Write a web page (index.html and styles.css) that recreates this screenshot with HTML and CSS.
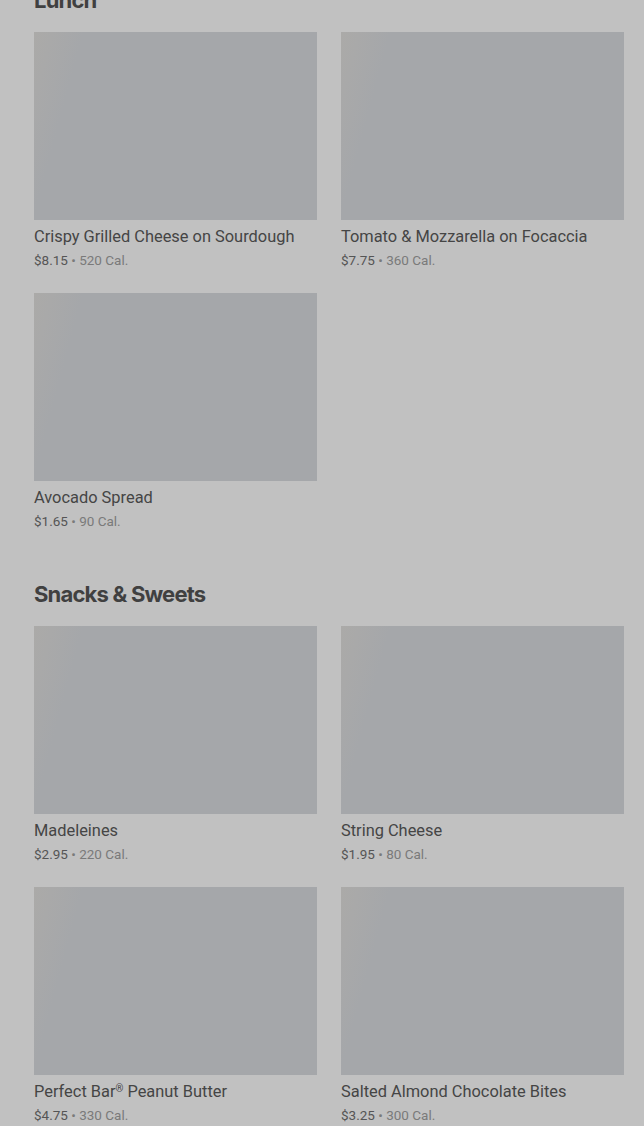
FILE: index.html
```html
<!DOCTYPE html>
<html lang="en">

<head>
    <meta charset="UTF-8">
    <meta name="viewport" content="width=device-width, initial-scale=1.0">
    <title>Menu</title>
    <link rel="stylesheet" href="styles.css">
</head>

<body>
    <main class="menu">
        <section class="menu-section">
            <h2>Lunch</h2>
            <div class="item-grid">
                <div class="item">
                    <div class="item-photo"></div>
                    <div class="item-name">Crispy Grilled Cheese on Sourdough</div>
                    <div class="item-meta"><span class="price">$8.15</span> &bull; 520 Cal.</div>
                </div>
                <div class="item">
                    <div class="item-photo"></div>
                    <div class="item-name">Tomato &amp; Mozzarella on Focaccia</div>
                    <div class="item-meta"><span class="price">$7.75</span> &bull; 360 Cal.</div>
                </div>
                <div class="item">
                    <div class="item-photo"></div>
                    <div class="item-name">Avocado Spread</div>
                    <div class="item-meta"><span class="price">$1.65</span> &bull; 90 Cal.</div>
                </div>
            </div>
        </section>

        <section class="menu-section">
            <h2>Snacks &amp; Sweets</h2>
            <div class="item-grid">
                <div class="item">
                    <div class="item-photo"></div>
                    <div class="item-name">Madeleines</div>
                    <div class="item-meta"><span class="price">$2.95</span> &bull; 220 Cal.</div>
                </div>
                <div class="item">
                    <div class="item-photo"></div>
                    <div class="item-name">String Cheese</div>
                    <div class="item-meta"><span class="price">$1.95</span> &bull; 80 Cal.</div>
                </div>
                <div class="item">
                    <div class="item-photo"></div>
                    <div class="item-name">Perfect Bar<span class="reg">&reg;</span> Peanut Butter</div>
                    <div class="item-meta"><span class="price">$4.75</span> &bull; 330 Cal.</div>
                </div>
                <div class="item">
                    <div class="item-photo"></div>
                    <div class="item-name">Salted Almond Chocolate Bites</div>
                    <div class="item-meta"><span class="price">$3.25</span> &bull; 300 Cal.</div>
                </div>
            </div>
        </section>
    </main>
</body>

</html>
```

FILE: styles.css
```css
body {
    font-family: Roboto, "Liberation Sans", sans-serif;
    margin: 0;
    padding: 0;
    background-color: #c1c1c1;
    overflow: hidden;
}

.menu {
    margin-top: -14px;
    padding: 0 20px 0 34px;
}

.menu-section {
    margin-bottom: 49px;
}

h2 {
    margin: 0 0 18px;
    font-family: Inter, "Liberation Sans", sans-serif;
    font-size: 22px;
    line-height: 28px;
    font-weight: 700;
    letter-spacing: -0.8px;
    color: #404040;
}

.item-grid {
    display: grid;
    grid-template-columns: 1fr 1fr;
    column-gap: 24px;
    row-gap: 23px;
}

.item-photo {
    height: 188px;
    background-color: #a5a7aa;
    background-image: linear-gradient(105deg, #abaaa8 0, #a9a9a9 18px, #a5a7aa 48px);
}

.item-name {
    margin-top: 6px;
    font-size: 16.4px;
    line-height: 22px;
    color: #454545;
}

.reg {
    font-size: 10px;
    vertical-align: 5px;
    line-height: 0;
}

.item-meta {
    margin-top: 2px;
    font-size: 13.5px;
    line-height: 20px;
    color: #7a7a7a;
}

.price {
    color: #555;
}
```
